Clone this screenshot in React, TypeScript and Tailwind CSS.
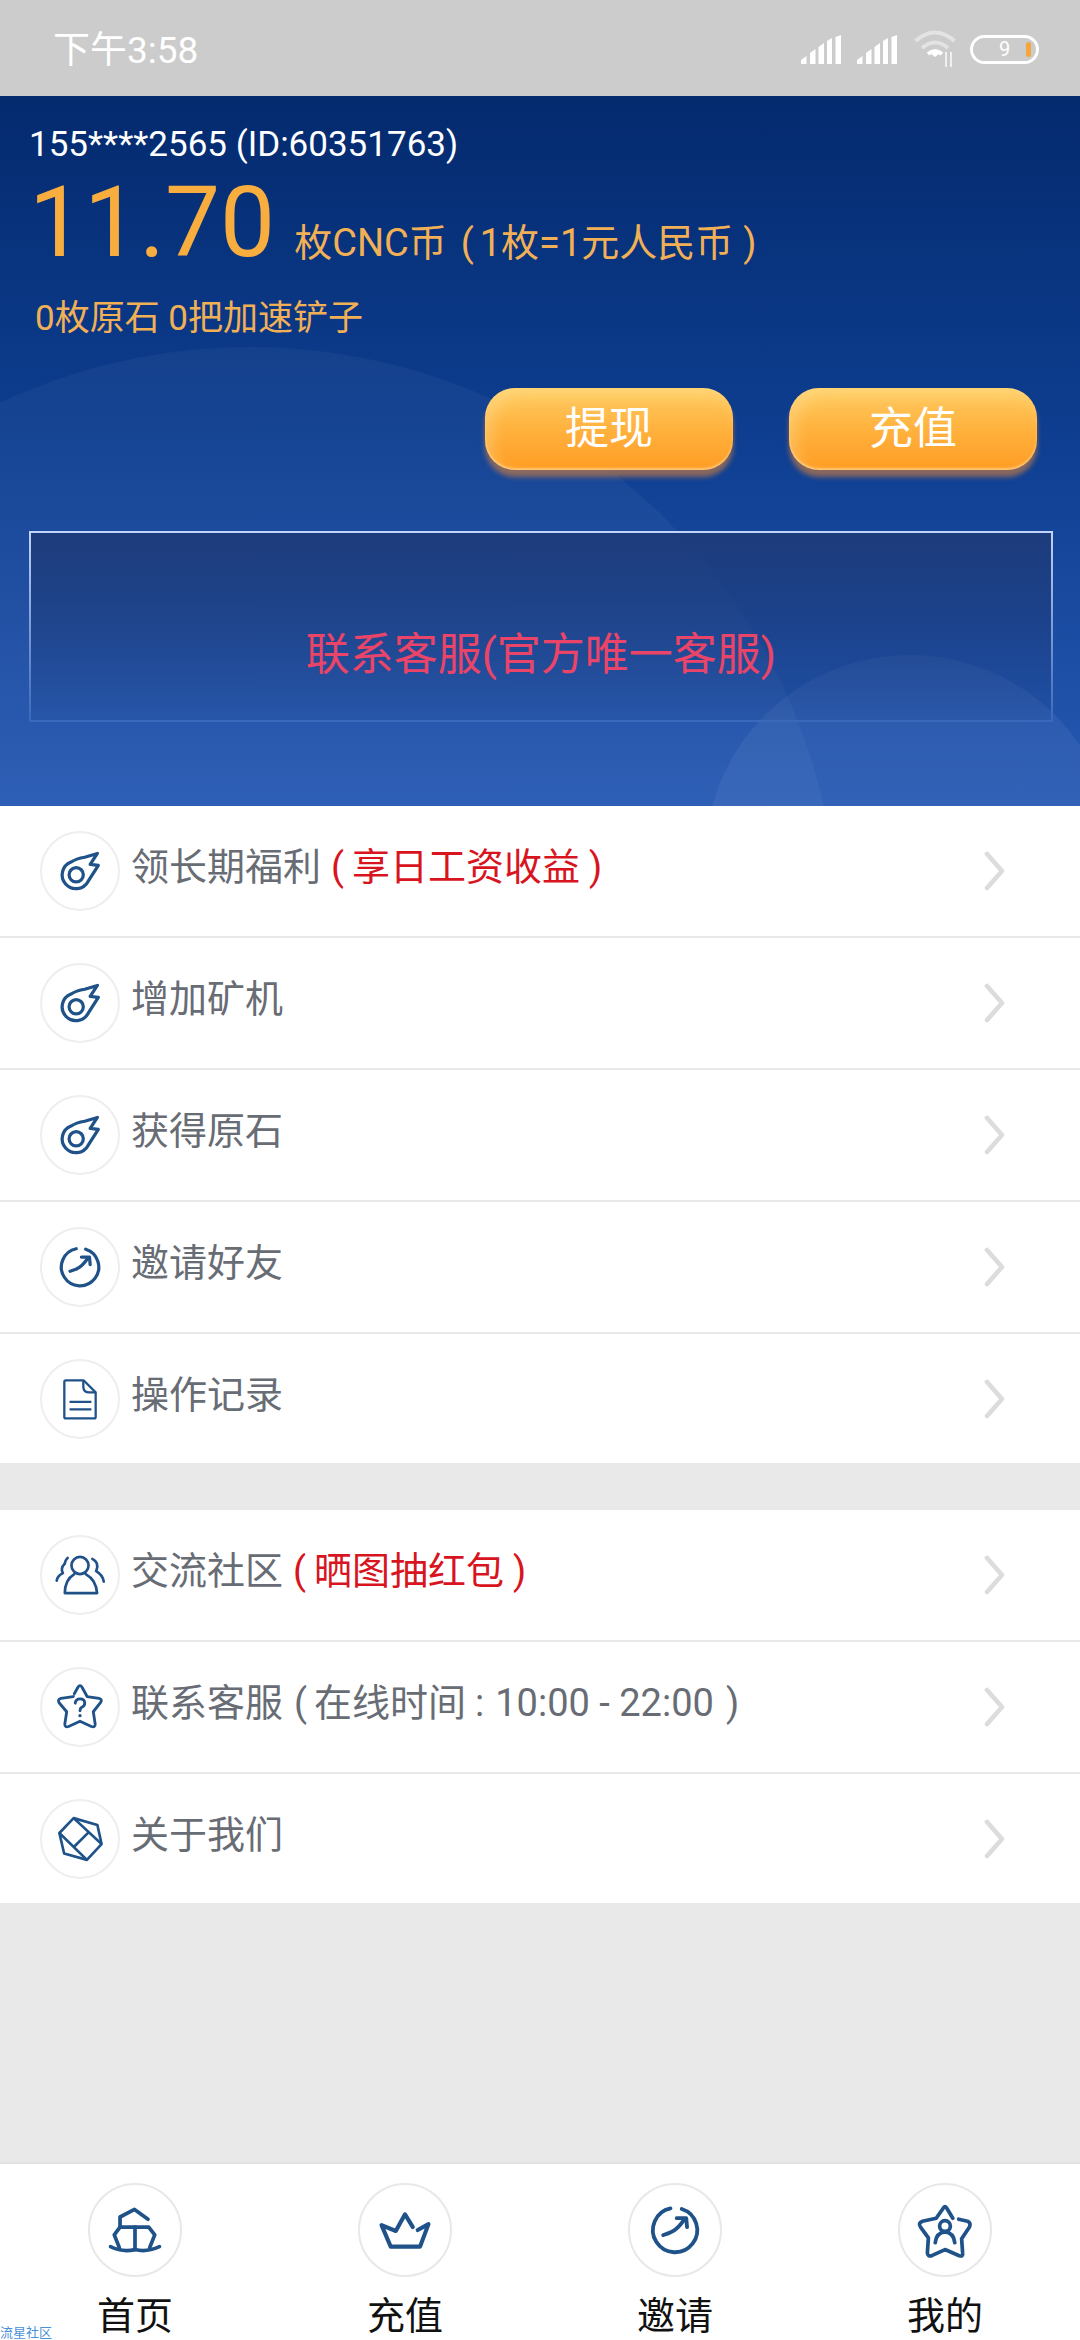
import React from "react";

const INK = "#1f5288";

function Meteor() {
  return (
    <svg viewBox="0 0 80 80" className="w-[80px] h-[80px]" fill="none" stroke={INK} strokeWidth="3.4" strokeLinejoin="round" strokeLinecap="round">
      <circle cx="36" cy="44" r="7.5" />
      <path d="M48.5 51 L59.3 34 L50.7 33 L58.3 21.5 L45 25.5 Q36 27 30.5 30.6 A14.5 14.5 0 1 0 48.5 51" />
    </svg>
  );
}

function Dial({ size = "w-[80px] h-[80px]" }: { size?: string }) {
  return (
    <svg viewBox="0 0 80 80" className={size} fill="none" stroke={INK} strokeWidth="3.4" strokeLinecap="round" strokeLinejoin="round">
      <path d="M36 20.8 A19.7 19.7 0 1 0 46 21.3" />
      <path d="M29.5 44.5 C37 42 41 41 48 31" />
      <path d="M41.5 29.5 L50 29.5 L50.7 37.5" />
    </svg>
  );
}

function Doc() {
  return (
    <svg viewBox="0 0 80 80" className="w-[80px] h-[80px]" fill="none" stroke={INK} strokeWidth="2.4" strokeLinejoin="round">
      <path d="M25 20.5 H44 L56.5 33 V59 Q56.5 60.5 55 60.5 H25 Q23.5 60.5 23.5 59 V22 Q23.5 20.5 25 20.5 Z" />
      <path d="M43.5 20.5 V27 Q43.5 33 50 33 H56.5" />
      <path d="M29 43 H52 M29 51 H52" />
    </svg>
  );
}

function People() {
  return (
    <svg viewBox="0 0 80 80" className="w-[80px] h-[80px]" fill="none" stroke={INK} strokeWidth="2.8" strokeLinecap="round" strokeLinejoin="round">
      <circle cx="40" cy="30" r="9" />
      <path d="M24 59 Q24 45 34 39 M46 39 Q57 45 58 59 H24" />
      <path d="M24 28 Q19 33 22 38 Q16 41 15.5 46" />
      <path d="M53 23 Q61 27 57 36 Q64 40 65 47" />
      <path d="M27 22 Q24 25 24 28" />
    </svg>
  );
}

function StarAsk() {
  return (
    <svg viewBox="0 0 80 80" className="w-[80px] h-[80px]" fill="none" stroke={INK} strokeWidth="3" strokeLinecap="round" strokeLinejoin="round">
      <path d="M34 26 L38 19 Q40 16 42 19 L47.5 29 L60 31 Q64 32 61.5 35.5 L54 45 L56 58 Q56 62 52 60.5 L40 55 L28 60.5 Q24 62 24 58 L26 45 L18 35.5 Q16 32 20 31 L33 29" />
      <path d="M35 36 Q35.5 31.5 40 31.5 Q45 31.5 45 36 Q45 39 41.5 40.5 Q40 41.5 40 44" />
      <path d="M40 49 V49.2" strokeWidth="3.4" />
    </svg>
  );
}

function Hexa() {
  return (
    <svg viewBox="0 0 80 80" className="w-[80px] h-[80px]" fill="none" stroke={INK} strokeWidth="2.8" strokeLinejoin="round">
      <path d="M33.3 18 L58.3 25.3 L62.7 45.3 L47.3 62 L23.3 55.3 L18.3 33.7 Z" />
      <path d="M18.3 33.7 L47.3 62 M33.3 18 L62.7 45.3 M33 49 L49 33" />
    </svg>
  );
}

function Ship() {
  return (
    <svg viewBox="0 0 92 94" className="w-[92px] h-[94px]" fill="none" stroke={INK} strokeWidth="3.8" strokeLinecap="round" strokeLinejoin="round">
      <path d="M30.7 44 V33.7 L45.5 26 L59.3 36" />
      <path d="M30 65 L24.8 52 L30.7 44 H46 H60 L66.2 52 L61 65" />
      <path d="M46 44 V67" />
      <path d="M21 64 Q33 70 46 67 Q58 70 71 64" />
    </svg>
  );
}

function Crown() {
  return (
    <svg viewBox="0 0 92 94" className="w-[92px] h-[94px]" fill="none" stroke={INK} strokeWidth="4.2" strokeLinecap="round" strokeLinejoin="round">
      <path d="M59 47 L70 41 L61.4 64 H31.4 L22 42 L36.6 48 L46 31 L54 44" />
    </svg>
  );
}

function StarUser() {
  return (
    <svg viewBox="0 0 92 94" className="w-[92px] h-[94px]" fill="none" stroke={INK} strokeWidth="3.8" strokeLinecap="round" strokeLinejoin="round">
      <path d="M54 35 L48 25 Q46 21 44 25 L37 35 L23 38 Q18 40 21 44 L29 55 L28 70 Q28 75 33 73 L46 67 L60 73 Q65 75 64 70 L63 56 L71 44 Q73 40 69 38 L60 36" />
      <circle cx="46" cy="43" r="5.5" />
      <path d="M36 60 Q37 50 46 49 Q55 50 56 60" />
    </svg>
  );
}

function Signal() {
  return (
    <svg viewBox="0 0 40 29" className="w-[40px] h-[29px]" fill="#ffffff">
      <path d="M0 29 V25 L5.5 21 V29 Z M9 29 V18 L14.5 14 V29 Z M17.5 29 V12 L23 8 V29 Z M26 29 V6 L31 3 V29 Z M34.5 29 V2 L40 0 V29 Z" />
    </svg>
  );
}

function Wifi() {
  return (
    <svg viewBox="0 0 44 40" className="w-[44px] h-[40px]" fill="none" stroke="#ffffff">
      <path d="M1.5 12 Q21 -5 40.5 12" strokeWidth="4" opacity="0.45" />
      <path d="M8 19 Q21 8 34 19" strokeWidth="4" opacity="0.45" />
      <path d="M14 25 Q21 19 28 25" strokeWidth="4" />
      <path d="M21 28 L16.5 24.5 Q21 22.5 25.5 24.5 Z" fill="#ffffff" stroke="none" />
      <path d="M32 23 V38 M37 23 V38" strokeWidth="2" opacity="0.7" />
    </svg>
  );
}

function Battery() {
  return (
    <div className="relative w-[69px] h-[29px] rounded-[15px] border-[3px] border-white flex items-center justify-center">
      <span className="text-white text-[20px] leading-none font-['Roboto',sans-serif]">9</span>
      <span className="absolute right-[5px] top-[4px] w-[5px] h-[15px] rounded-full bg-[#f5a53a]" />
    </div>
  );
}

function Chevron() {
  return (
    <svg viewBox="0 0 24 40" className="w-[24px] h-[40px] shrink-0" fill="none" stroke="#dcdcde" strokeWidth="4.6" strokeLinecap="round" strokeLinejoin="round">
      <path d="M3 3 L18 20 L3 37" />
    </svg>
  );
}

function Badge({ children }: { children: React.ReactNode }) {
  return (
    <div className="w-[80px] h-[80px] rounded-full border-2 border-[#eeeeee] flex items-center justify-center shrink-0 bg-white">
      {children}
    </div>
  );
}

type Row = { icon: React.ReactNode; label: React.ReactNode; note?: string };

function MenuRow({ icon, label, note, last }: Row & { last?: boolean }) {
  return (
    <div className={`flex items-center pl-[40px] pr-[72px] bg-white ${last ? "h-[129px]" : "h-[132px] border-b-2 border-[#e8e8e8]"}`}>
      <Badge>{icon}</Badge>
      <div className="ml-[11px] flex-1 text-[38px] leading-[44px] text-[#686c74] -mt-[8px] whitespace-nowrap">
        {label}
        {note ? (
          <span className="text-[#d8141e]">
            <span className="ml-[10px]">(</span>
            <span className="ml-[8px]">{note}</span>
            <span className="ml-[9px]">)</span>
          </span>
        ) : null}
      </div>
      <Chevron />
    </div>
  );
}

function NavItem({ icon, label }: { icon: React.ReactNode; label: string }) {
  return (
    <div className="flex flex-col items-center">
      <div className="w-[94px] h-[94px] rounded-full border-2 border-[#e8e8e8] flex items-center justify-center">
        {icon}
      </div>
      <span className="mt-[17px] text-[38px] leading-[44px] text-[#111111]">{label}</span>
    </div>
  );
}

const firstGroup: (Row & { id: string })[] = [
  { id: "salary", icon: <Meteor />, label: "领长期福利", note: "享日工资收益" },
  { id: "miner", icon: <Meteor />, label: "增加矿机" },
  { id: "stone", icon: <Meteor />, label: "获得原石" },
  { id: "invite", icon: <Dial />, label: "邀请好友" },
  { id: "log", icon: <Doc />, label: "操作记录" },
];

const secondGroup: (Row & { id: string })[] = [
  { id: "community", icon: <People />, label: "交流社区", note: "晒图抽红包" },
  {
    id: "support",
    icon: <StarAsk />,
    label: (
      <>
        联系客服
        <span className="ml-[11px]">(</span>
        <span className="ml-[7px]">在线时间</span>
        <span className="ml-[9px]">:</span>
        <span className="ml-[11px]">10:00 - 22:00</span>
        <span className="ml-[12px]">)</span>
      </>
    ),
  },
  { id: "about", icon: <Hexa />, label: "关于我们" },
];

const goldButton =
  "w-[248px] h-[82px] rounded-[30px] bg-gradient-to-b from-[#ffcc60] via-[#ffb23e] to-[#ff9c22] shadow-[0_7px_5px_rgba(190,120,70,0.7),inset_8px_8px_14px_rgba(255,238,180,0.3),inset_0_-2px_2px_rgba(255,225,170,0.6)] text-white text-[44px] leading-none";

export default function App() {
  return (
    <div className="relative w-[1080px] h-[2340px] overflow-hidden bg-[#e9e9e9] flex flex-col font-['Roboto','Noto_Sans_CJK_SC',sans-serif]">
      {/* status bar */}
      <div className="h-[96px] shrink-0 bg-[#cccccc] flex items-center pl-[53px] pr-[41px] pt-[2px]">
        <span className="text-white text-[37px] leading-none mt-[2px]">下午3:58</span>
        <div className="ml-auto flex items-center gap-[16px]">
          <Signal />
          <Signal />
          <div className="ml-[1px]"><Wifi /></div>
          <div className="-ml-[4px]"><Battery /></div>
        </div>
      </div>

      {/* account summary */}
      <div className="relative h-[710px] shrink-0 overflow-hidden bg-gradient-to-b from-[#042a6e] via-[#0f3f92] to-[#2659b3] px-[29px] pt-[27px]">
        <div className="absolute left-[-338px] top-[251px] w-[1176px] h-[1176px] rounded-full bg-white/[0.035]" />
        <div className="absolute left-[705px] top-[559px] w-[410px] h-[410px] rounded-full bg-white/[0.055]" />

        <div className="relative flex flex-col">
          <div className="text-white text-[35px] leading-[44px]">155****2565 (ID:60351763)</div>
          <div className="flex items-baseline mt-[5px] text-[#f7ae3f]">
            <span className="text-[98px] leading-[102px]">11.70</span>
            <span className="ml-[19px] text-[38px] leading-[44px] text-[#f2b056] whitespace-nowrap">
              枚CNC币
              <span className="ml-[14px]">(</span>
              <span className="ml-[6px]">1枚=1元人民币</span>
              <span className="ml-[10px]">)</span>
            </span>
          </div>
          <div className="mt-[23px] ml-[6px] text-[35px] leading-[44px] text-[#f2b056]">0枚原石 0把加速铲子</div>

          <div className="flex justify-end gap-[56px] mt-[47px] pr-[14px]">
            <button className={goldButton}>提现</button>
            <button className={goldButton}>充值</button>
          </div>

          <div className="mt-[61px] -mr-[2px] h-[191px] border-2 [border-image:linear-gradient(to_bottom,#c2d4f7,#3a68bb)_1] bg-gradient-to-b from-[#1d3c7c] to-[#1d3c7c]/10 flex items-center justify-center pt-[56px]">
            <span className="text-[44px] leading-none text-[#ea4468]">联系客服(官方唯一客服)</span>
          </div>
        </div>
      </div>

      {/* menu groups */}
      <div className="flex flex-col">
        {firstGroup.map(({ id, ...row }, i) => (
          <MenuRow key={id} {...row} last={i === firstGroup.length - 1} />
        ))}
      </div>
      <div className="mt-[47px] flex flex-col">
        {secondGroup.map(({ id, ...row }, i) => (
          <MenuRow key={id} {...row} last={i === secondGroup.length - 1} />
        ))}
      </div>

      {/* bottom navigation */}
      <div className="mt-auto h-[178px] shrink-0 bg-white border-t-2 border-[#e2e2e2] grid grid-cols-4 pt-[19px]">
        <NavItem icon={<Ship />} label="首页" />
        <NavItem icon={<Crown />} label="充值" />
        <NavItem icon={<Dial size="w-[100px] h-[100px]" />} label="邀请" />
        <NavItem icon={<StarUser />} label="我的" />
      </div>

      <span className="absolute left-0 top-[2325px] text-[13px] leading-[15px] text-[#4a90d9]">流星社区</span>
    </div>
  );
}
